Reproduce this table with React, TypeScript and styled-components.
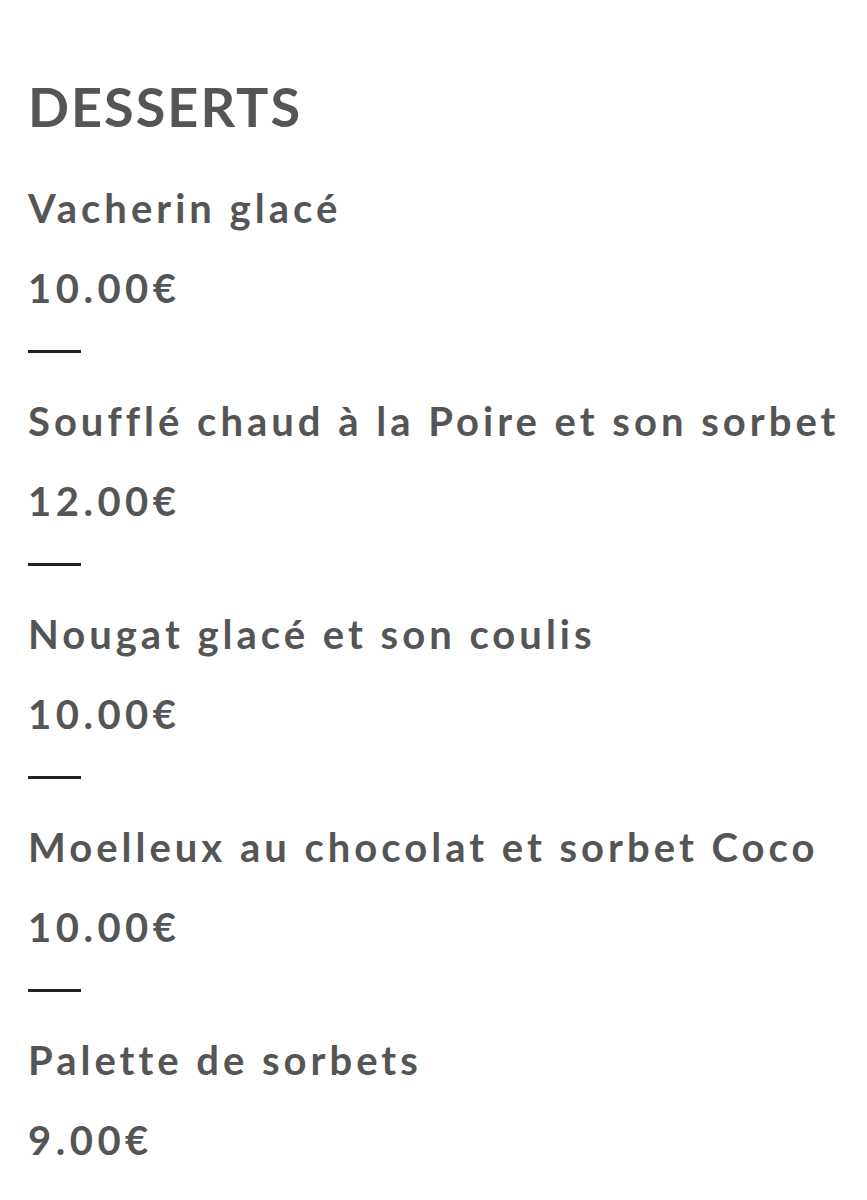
import React from 'react';
import styled, { createGlobalStyle } from 'styled-components';

const GlobalStyle = createGlobalStyle`
  body {
    margin: 0;
    background: #fff;
    font-family: 'Lato', 'Open Sans', sans-serif;
  }
`;

const Menu = styled.section`
  padding: 74px 0 40px 28px;
  color: #555555;
`;

const Heading = styled.h2`
  margin: 0 0 29px;
  font-size: 54px;
  line-height: 65px;
  font-weight: 700;
  letter-spacing: 2px;
`;

const Item = styled.div`
  display: flex;
  flex-direction: column;
  align-items: flex-start;
`;

const Name = styled.h3`
  margin: 0;
  font-size: 40px;
  line-height: 80px;
  font-weight: 700;
  letter-spacing: 4px;
  white-space: nowrap;
`;

const Price = styled.p`
  margin: 0;
  font-size: 40px;
  line-height: 80px;
  font-weight: 700;
  letter-spacing: 4.5px;
`;

const Dash = styled.hr`
  width: 53px;
  height: 3px;
  margin: 22px 0 28px;
  border: 0;
  background: #222222;
`;

interface Dessert {
  name: string;
  price: string;
}

const desserts: Dessert[] = [
  { name: 'Vacherin glacé', price: '10.00€' },
  { name: 'Soufflé chaud à la Poire et son sorbet', price: '12.00€' },
  { name: 'Nougat glacé et son coulis', price: '10.00€' },
  { name: 'Moelleux au chocolat et sorbet Coco', price: '10.00€' },
  { name: 'Palette de sorbets', price: '9.00€' },
];

const App = () => (
  <>
    <GlobalStyle />
    <Menu>
      <Heading>DESSERTS</Heading>
      {desserts.map((d, i) => (
        <Item key={d.name}>
          <Name>{d.name}</Name>
          <Price>{d.price}</Price>
          {i < desserts.length - 1 && <Dash />}
        </Item>
      ))}
    </Menu>
  </>
);

export default App;
